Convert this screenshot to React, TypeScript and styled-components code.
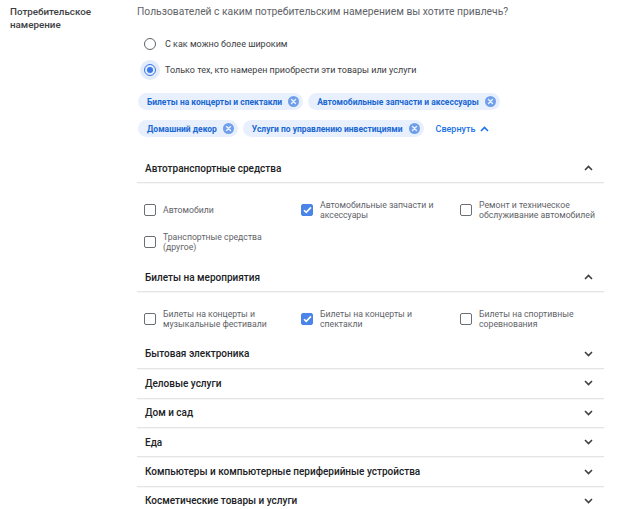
import styled, { createGlobalStyle } from "styled-components";

const GlobalStyle = createGlobalStyle`
  body {
    margin: 0;
    background: #ffffff;
    font-family: Roboto, "Noto Sans", Arial, sans-serif;
    -webkit-font-smoothing: antialiased;
  }
`;

const Page = styled.div`
  display: grid;
  grid-template-columns: 137px 467px;
  width: 620px;
  height: 509px;
  overflow: hidden;
  box-sizing: border-box;
`;

const SideLabel = styled.div`
  padding: 5px 0 0 10px;
  font-size: 9.8px;
  line-height: 13px;
  font-weight: 500;
  color: #3c4043;
`;

const Main = styled.div`
  display: flex;
  flex-direction: column;
  padding-top: 5px;
`;

const Question = styled.div`
  font-size: 10.3px;
  line-height: 14px;
  color: #5f6368;
`;

const RadioGroup = styled.div`
  display: flex;
  flex-direction: column;
  gap: 6px;
  margin-top: 15px;
  padding-left: 3px;
`;

const RadioRow = styled.label`
  display: flex;
  align-items: center;
  gap: 5px;
  height: 20px;
  font-size: 9px;
  color: #3c4043;
`;

const RadioHalo = styled.span<{ $on?: boolean }>`
  display: flex;
  align-items: center;
  justify-content: center;
  width: 20px;
  height: 20px;
  border-radius: 50%;
  background: ${(p) => (p.$on ? "#e3ecfb" : "transparent")};
`;

const RadioDot = styled.span<{ $on?: boolean }>`
  box-sizing: border-box;
  width: 12px;
  height: 12px;
  border-radius: 50%;
  border: 1.5px solid ${(p) => (p.$on ? "#3b78e7" : "#5f6368")};
  display: flex;
  align-items: center;
  justify-content: center;
  &::after {
    content: "";
    width: 6px;
    height: 6px;
    border-radius: 50%;
    background: ${(p) => (p.$on ? "#3b78e7" : "transparent")};
  }
`;

const Chips = styled.div`
  display: flex;
  flex-wrap: wrap;
  align-items: center;
  column-gap: 5px;
  row-gap: 10px;
  margin-top: 13px;
  padding-left: 1px;
`;

const Chip = styled.span`
  display: inline-flex;
  align-items: center;
  gap: 6px;
  height: 17px;
  padding: 0 4px 0 9px;
  border-radius: 9px;
  background: #e8f0fe;
  color: #1967d2;
  font-size: 8.5px;
  font-weight: 700;
  white-space: nowrap;
`;

const Collapse = styled.span`
  display: inline-flex;
  align-items: center;
  gap: 5px;
  margin-left: 7px;
  color: #1a73e8;
  font-size: 9px;
  font-weight: 500;
`;

const Accordion = styled.div`
  margin-top: 17px;
  display: flex;
  flex-direction: column;
`;

const Header = styled.div`
  display: flex;
  align-items: center;
  justify-content: space-between;
  height: 28.4px;
  padding: 0 11px 0 8px;
  border-bottom: 1px solid #e4e4e4;
  box-shadow: 0 1px 1px rgba(0, 0, 0, 0.03);
  font-size: 10px;
  font-weight: 500;
  color: #202124;
`;

const Options = styled.div`
  display: grid;
  grid-template-columns: 157px 159px 1fr;
  row-gap: 11px;
  padding: 16.5px 0 10px 7px;
`;

const Option = styled.label`
  display: flex;
  align-items: center;
  gap: 7px;
  min-height: 20px;
  font-size: 8.7px;
  line-height: 10.5px;
  color: #5f6368;
`;

const OptionText = styled.span`
  max-width: 118px;
`;

const Box = styled.span<{ $on?: boolean }>`
  box-sizing: border-box;
  flex: none;
  width: 12px;
  height: 12px;
  border-radius: 2px;
  border: 1.5px solid ${(p) => (p.$on ? "#4a84e8" : "#6b6f73")};
  background: ${(p) => (p.$on ? "#4a84e8" : "#fff")};
  display: flex;
  align-items: center;
  justify-content: center;
`;

const ClearIcon = () => (
  <svg width="11" height="11" viewBox="0 0 12 12">
    <circle cx="6" cy="6" r="6" fill="#6f9eea" />
    <path d="M3.8 3.8l4.4 4.4M8.2 3.8L3.8 8.2" stroke="#e8f0fe" strokeWidth="1.5" strokeLinecap="round" />
  </svg>
);

const Chevron = ({ up, color = "#3c4043" }: { up?: boolean; color?: string }) => (
  <svg width="9" height="6" viewBox="0 0 9 6">
    <path
      d={up ? "M1 5L4.5 1.5 8 5" : "M1 1l3.5 3.5L8 1"}
      fill="none"
      stroke={color}
      strokeWidth="1.6"
    />
  </svg>
);

const Check = () => (
  <svg width="9" height="8" viewBox="0 0 9 8">
    <path d="M1 4.2l2.2 2.2L8 1.4" fill="none" stroke="#fff" strokeWidth="1.6" />
  </svg>
);

type Section = { title: string; items?: { label: string; on?: boolean }[] };

const sections: Section[] = [
  {
    title: "Автотранспортные средства",
    items: [
      { label: "Автомобили" },
      { label: "Автомобильные запчасти и аксессуары", on: true },
      { label: "Ремонт и техническое обслуживание автомобилей" },
      { label: "Транспортные средства (другое)" },
    ],
  },
  {
    title: "Билеты на мероприятия",
    items: [
      { label: "Билеты на концерты и музыкальные фестивали" },
      { label: "Билеты на концерты и спектакли", on: true },
      { label: "Билеты на спортивные соревнования" },
    ],
  },
  { title: "Бытовая электроника" },
  { title: "Деловые услуги" },
  { title: "Дом и сад" },
  { title: "Еда" },
  { title: "Компьютеры и компьютерные периферийные устройства" },
  { title: "Косметические товары и услуги" },
];

const chips = [
  "Билеты на концерты и спектакли",
  "Автомобильные запчасти и аксессуары",
  "Домашний декор",
  "Услуги по управлению инвестициями",
];

export default function App() {
  return (
    <>
      <GlobalStyle />
      <Page>
        <SideLabel>
          Потребительское
          <br />
          намерение
        </SideLabel>
        <Main>
          <Question>Пользователей с каким потребительским намерением вы хотите привлечь?</Question>
          <RadioGroup>
            <RadioRow>
              <RadioHalo>
                <RadioDot />
              </RadioHalo>
              С как можно более широким
            </RadioRow>
            <RadioRow>
              <RadioHalo $on>
                <RadioDot $on />
              </RadioHalo>
              Только тех, кто намерен приобрести эти товары или услуги
            </RadioRow>
          </RadioGroup>
          <Chips>
            {chips.map((c) => (
              <Chip key={c}>
                {c}
                <ClearIcon />
              </Chip>
            ))}
            <Collapse>
              Свернуть
              <Chevron up color="#1a73e8" />
            </Collapse>
          </Chips>
          <Accordion>
            {sections.map((s) => (
              <div key={s.title}>
                <Header>
                  {s.title}
                  <Chevron up={!!s.items} />
                </Header>
                {s.items && (
                  <Options>
                    {s.items.map((it) => (
                      <Option key={it.label}>
                        <Box $on={it.on}>{it.on && <Check />}</Box>
                        <OptionText>{it.label}</OptionText>
                      </Option>
                    ))}
                  </Options>
                )}
              </div>
            ))}
          </Accordion>
        </Main>
      </Page>
    </>
  );
}
